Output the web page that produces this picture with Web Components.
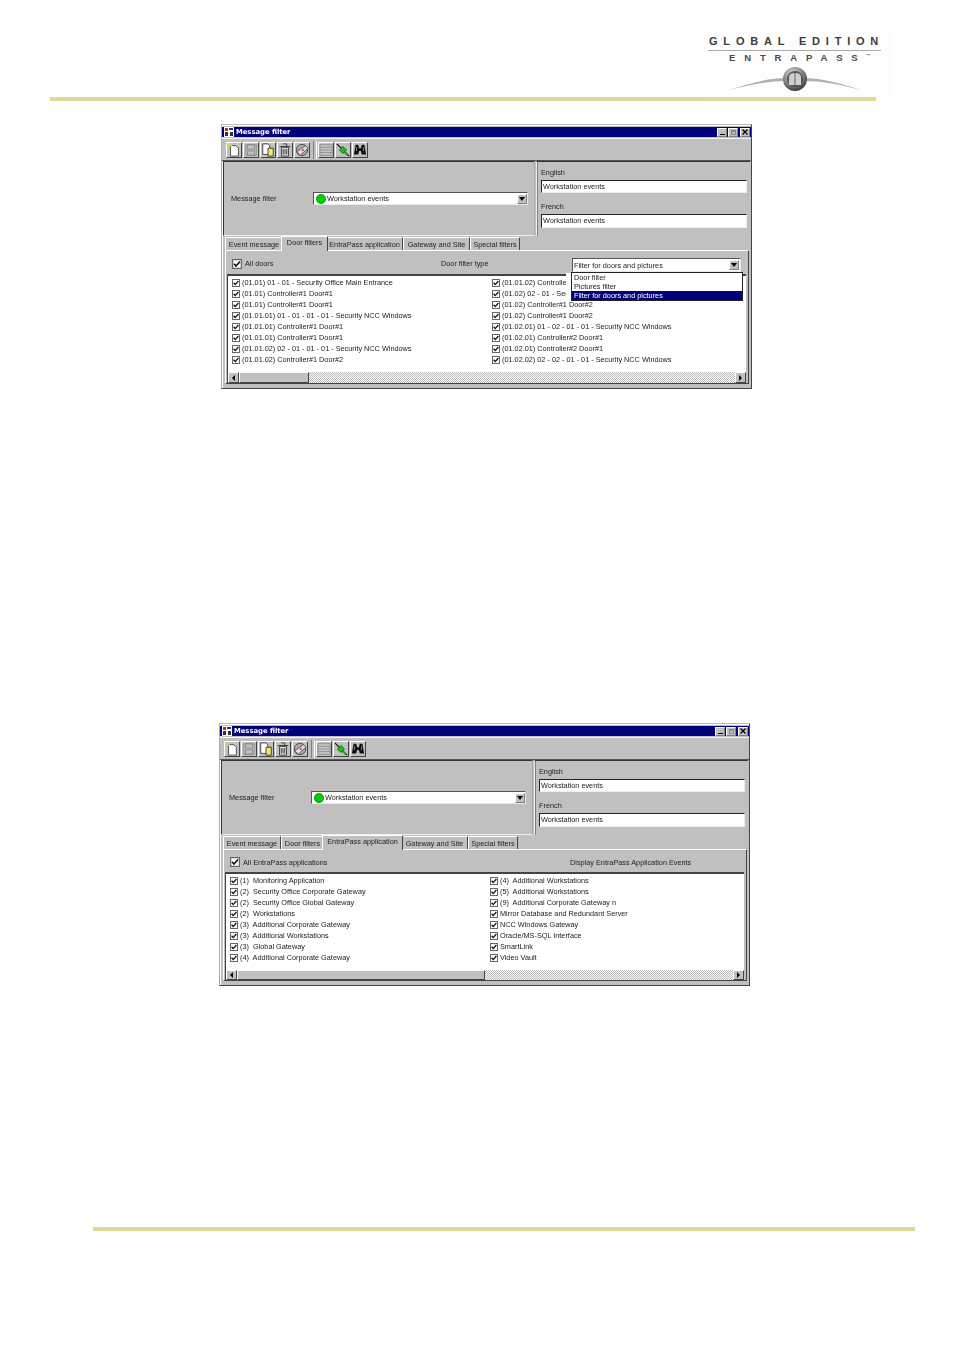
<!DOCTYPE html>
<html lang="en"><head><meta charset="utf-8"><title>Message filter</title>
<style>
html,body{margin:0;padding:0;background:#fff}
body{width:954px;height:1350px;overflow:hidden;font-family:"Liberation Sans",Arial,sans-serif;display:flex;flex-direction:column}
x-dialog.one{margin:23px 0 0 221px}
x-dialog.two{margin:334px 0 0 219px}
x-rule.foot{margin:241px 0 0 93px;width:822px}
</style></head><body>
<x-header></x-header>

<x-dialog class="one" tab="1" head-h="25" scroll-h="11" thumb="70">
  <x-check slot="head" label="All doors" head></x-check>
  <span slot="title">Door filter type</span>
  <x-combo slot="control"></x-combo>
  <x-check slot="left" label="(01.01) 01 - 01 - Security Office Main Entrance"></x-check>
  <x-check slot="left" label="(01.01) Controller#1 Door#1"></x-check>
  <x-check slot="left" label="(01.01) Controller#1 Door#1"></x-check>
  <x-check slot="left" label="(01.01.01) 01 - 01 - 01 - 01 - Security NCC Windows"></x-check>
  <x-check slot="left" label="(01.01.01) Controller#1 Door#1"></x-check>
  <x-check slot="left" label="(01.01.01) Controller#1 Door#1"></x-check>
  <x-check slot="left" label="(01.01.02) 02 - 01 - 01 - 01 - Security NCC Windows"></x-check>
  <x-check slot="left" label="(01.01.02) Controller#1 Door#2"></x-check>
  <x-check slot="right" label="(01.01.02) Controlle"></x-check>
  <x-check slot="right" label="(01.02) 02 - 01 - Sec"></x-check>
  <x-check slot="right" label="(01.02) Controller#1 Door#2"></x-check>
  <x-check slot="right" label="(01.02) Controller#1 Door#2"></x-check>
  <x-check slot="right" label="(01.02.01) 01 - 02 - 01 - 01 - Security NCC Windows"></x-check>
  <x-check slot="right" label="(01.02.01) Controller#2 Door#1"></x-check>
  <x-check slot="right" label="(01.02.01) Controller#2 Door#1"></x-check>
  <x-check slot="right" label="(01.02.02) 02 - 02 - 01 - 01 - Security NCC Windows"></x-check>
  <x-dropdown slot="overlay"></x-dropdown>
</x-dialog>

<x-dialog class="two" tab="2" head-h="24" scroll-h="10" thumb="248">
  <x-check slot="head" label="All EntraPass applications" head></x-check>
  <span slot="title">Display EntraPass Application Events</span>
  <x-check slot="left" label="(1)  Monitoring Application"></x-check>
  <x-check slot="left" label="(2)  Security Office Corporate Gateway"></x-check>
  <x-check slot="left" label="(2)  Security Office Global Gateway"></x-check>
  <x-check slot="left" label="(2)  Workstations"></x-check>
  <x-check slot="left" label="(3)  Additional Corporate Gateway"></x-check>
  <x-check slot="left" label="(3)  Additional Workstations"></x-check>
  <x-check slot="left" label="(3)  Global Gateway"></x-check>
  <x-check slot="left" label="(4)  Additional Corporate Gateway"></x-check>
  <x-check slot="right" label="(4)  Additional Workstations"></x-check>
  <x-check slot="right" label="(5)  Additional Workstations"></x-check>
  <x-check slot="right" label="(9)  Additional Corporate Gateway n"></x-check>
  <x-check slot="right" label="Mirror Database and Redundant Server"></x-check>
  <x-check slot="right" label="NCC Windows Gateway"></x-check>
  <x-check slot="right" label="Oracle/MS-SQL Interface"></x-check>
  <x-check slot="right" label="SmartLink"></x-check>
  <x-check slot="right" label="Video Vault"></x-check>
</x-dialog>

<x-rule class="foot"></x-rule>

<script>
function def(name, css, html, init){
  customElements.define(name, class extends HTMLElement{
    constructor(){super();this.attachShadow({mode:"open"}).innerHTML=`<style>${css}</style>${html}`;}
    connectedCallback(){ if(init) init.call(this,this.shadowRoot); }
  });
}
const RAISED="border:1px solid;border-color:#fff #808080 #808080 #fff;";
const SUNK="border:1px solid;border-color:#555 #e8e8e8 #e8e8e8 #555;";
const FONT='font:7.3px/11px "Liberation Sans",Arial,sans-serif;color:#222;';
const host=el=>el.getRootNode().host;

def("x-rule",":host{display:block;height:4px;background:#dcd99a}","");

def("x-header",`:host{display:block;height:101px;position:relative}
.logo{margin-left:704px;width:189px;height:65px;padding-top:32px;background:linear-gradient(#fff 32px,#fdfdfd 32px);display:flex;flex-direction:column;align-items:flex-start;color:#444;font-family:"Liberation Sans",Arial,sans-serif}
.g{font:bold 11px/11px "Liberation Sans",Arial,sans-serif;letter-spacing:5.8px;white-space:nowrap;margin:4px 0 0 4px;padding:0 0 3px 1px;border-bottom:1px solid #aaa;width:172px;color:#3c3c3c;overflow:visible}
.e{font:bold 9.5px/10px "Liberation Sans",Arial,sans-serif;letter-spacing:8.85px;white-space:nowrap;margin:2px 0 0 25px;color:#4a4a4a}
.e sup{font-size:4px;letter-spacing:0;vertical-align:4px;line-height:0}
svg{display:block;margin:1px 0 0 23px;flex:none}
x-rule{margin-left:50px;width:826px}`,
`<div class="logo"><div class="g">GLOBAL EDITION</div><div class="e">ENTRAPASS<sup>™</sup></div>
<svg width="136" height="30" viewBox="0 0 136 30">
<defs><radialGradient id="b" cx=".4" cy=".3" r=".8"><stop offset="0" stop-color="#ddd"/><stop offset=".6" stop-color="#777"/><stop offset="1" stop-color="#222"/></radialGradient></defs>
<path d="M2 26Q38 14 58 14L58 17Q36 17 2 26Z" fill="#b0b0b0"/>
<path d="M134 26Q98 14 78 14L78 17Q100 17 134 26Z" fill="#b0b0b0"/>
<circle cx="68" cy="15" r="12" fill="url(#b)"/><circle cx="68" cy="15" r="8" fill="#555"/><path d="M62 21V13Q62 9 68 9T74 13V21Z" fill="#cfcfcf"/><path d="M68 9V21" stroke="#666"/></svg></div><x-rule></x-rule>`);

def("x-check",`:host{display:flex;align-items:center;height:11px;${FONT}white-space:pre}
:host([head]){height:14px}
svg{flex:none;margin-right:2px}`,
`<svg width="8" height="8" viewBox="0 0 8 8"><rect x=".5" y=".5" width="7" height="7" fill="#fff" stroke="#666"/><path d="M1.6 3.8l1.6 1.8L6.4 2" fill="none" stroke="#111" stroke-width="1.3"/></svg><span></span>`,
function(s){s.querySelector("span").textContent=this.getAttribute("label");
 if(this.hasAttribute("head")){const v=s.querySelector("svg");v.setAttribute("width",10);v.setAttribute("height",10);v.style.marginRight="3px";}});

def("x-combo",`:host{display:flex;align-items:center;height:14px;box-sizing:border-box;width:169px;background:#fff;${SUNK}${FONT}position:relative}
span{flex:1;padding-left:1px}
b{width:10px;height:10px;background:#c0c0c0;${RAISED}margin-right:1px;display:flex;align-items:center;justify-content:center;box-sizing:border-box}
i{border:3px solid transparent;border-top:4px solid #000;border-bottom:0}`,
`<span>Filter for doors and pictures</span><b><i></i></b>`);

def("x-dropdown",`:host{display:block;position:absolute;left:349px;top:147px;width:172px;box-sizing:border-box;height:29px;background:#fff;border:1px solid #222;${FONT}line-height:9px}
:host::before{content:"";position:absolute;left:-6px;top:0;width:5px;height:29px;background:#fff}
div{height:9px;padding-left:2px;white-space:nowrap}
.s{background:#00007b;color:#fff}`,
`<div>Door filter</div><div>Pictures filter</div><div class="s">Filter for doors and pictures</div>`);

const ICONS=[
`<path d="M4 3h6l3 3v9H4z" fill="#fff" stroke="#444"/><path d="M2 1l2 3M5 0v3M0 4h3" stroke="#e8e020" stroke-width="1.3"/>`,
`<path d="M2 2h12v12H2z" fill="none" stroke="#8a8a8a"/><path d="M4 2h8v5H4zM4 9h8v5H4z" fill="none" stroke="#8a8a8a"/>`,
`<path d="M2 1h6l2 2v10H2z" fill="#fff" stroke="#333"/><path d="M8 6h6v9H8z" fill="#f3e86a" stroke="#333"/>`,
`<path d="M4 5h8v10H4z" fill="#ddd" stroke="#333"/><path d="M2 4h12M6 1h4v3M6 7v6M8 7v6M10 7v6" fill="none" stroke="#333"/>`,
`<circle cx="8" cy="8" r="6.5" fill="#aaa" stroke="#444"/><path d="M2 10l10-7 3 3-9 8z" fill="#ddd" stroke="#555"/><circle cx="9" cy="8" r="1.2" fill="#d33"/>`,
`<path d="M1 2h14v12H1z" fill="#c8c8c8" stroke="#8a8a8a"/><path d="M1 5h14M1 8h14M1 11h14" stroke="#8a8a8a"/>`,
`<path d="M1 1l14 14" stroke="#111" stroke-width="1.5"/><path d="M4 8l4-4 4 4-4 4z" fill="#18c018" stroke="#0a6a0a"/><path d="M10 11l3 3" stroke="#18c018" stroke-width="2"/>`,
`<path d="M3 2h3l1 4h2l1-4h3l2 11h-5L9 9H7l-1 4H1z" fill="#111"/><path d="M4 5v4M12 5v4" stroke="#999"/>`];

def("x-tool",`:host{display:block;width:14px;height:14px;background:#c0c0c0;${RAISED}border-right-color:#444;border-bottom-color:#444;margin-right:1px}
svg{display:block}`,`<svg width="14" height="14" viewBox="0 0 16 16"></svg>`,
function(s){s.querySelector("svg").innerHTML=ICONS[+this.getAttribute("i")];});

def("x-toolbar",`:host{display:flex;align-items:center;box-sizing:border-box;padding:1px 0 0 4px;background:#c0c0c0;border-top:1px solid #f4f4f4;border-bottom:1px solid #555;margin-top:1px;height:23px}
.sep{width:2px;height:18px;margin:0 1px 0 2px;border-left:1px solid #808080;border-right:1px solid #fff}`,
`<x-tool i="0"></x-tool><x-tool i="1"></x-tool><x-tool i="2"></x-tool><x-tool i="3"></x-tool><x-tool i="4"></x-tool><div class="sep"></div><x-tool i="5"></x-tool><x-tool i="6"></x-tool><x-tool i="7"></x-tool>`);

def("x-titlebar",`:host{display:flex;align-items:center;height:10px;background:#00007b;color:#fff;padding-left:2px;font:bold 6.8px/10px "DejaVu Sans",sans-serif}
svg{margin-right:2px;flex:none}
span{flex:1}
.b{width:10px;height:9px;box-sizing:border-box;background:#c0c0c0;${RAISED}margin-left:1px;display:flex;align-items:center;justify-content:center;color:#000}
.c{margin-left:2px;margin-right:1px}
.min{width:5px;height:1px;background:#000;margin-top:5px}
.max{width:5px;height:5px;border:1px solid #8a8a8a;border-top-width:2px;box-sizing:border-box}`,
`<svg width="10" height="10" viewBox="0 0 10 10"><rect width="10" height="10" fill="#fff"/><path d="M1 1h3v3H1z" fill="#b03030"/><path d="M5 1h4v2H5z" fill="#203090"/><path d="M1 5h3v4H1zM6 5h3v4H6z" fill="#333"/></svg><span>Message filter</span><div class="b"><div class="min"></div></div><div class="b"><div class="max"></div></div><div class="b c"><svg width="6" height="6" viewBox="0 0 6 6" style="margin:0"><path d="M.5.5l5 5M5.5.5l-5 5" stroke="#000" stroke-width="1.2"/></svg></div>`);

def("x-upper",`:host{display:flex;height:75px;${FONT}margin:0 1px 0 1px;background:#c0c0c0}
.l{width:312px;box-sizing:border-box;border-top:1px solid #333;border-left:1px solid #333;border-right:1px solid #aaa;border-bottom:1px solid #eee;display:flex;align-items:center;padding:0 6px 0 7px;position:relative}
.l>span{width:82px;flex:none}
.r{flex:1;margin-left:1px;border-top:1px solid #333;border-left:1px solid #eee;box-shadow:inset 1px 0 #808080;padding:6px 3px 0 4px;display:flex;flex-direction:column}
.r label{height:9px;line-height:9px;padding-bottom:3px;display:block}
.in{height:13px;box-sizing:border-box;background:#fff;${SUNK}border-color:#222 #eee #eee #222;padding-left:1px;line-height:12px;margin-bottom:9px}
.in.b2{height:14px}
.cb{flex:1;height:13px;box-sizing:border-box;background:#fff;${SUNK}display:flex;align-items:center;padding-left:2px}
.cb svg{margin-right:1px}
.cb span{flex:1}
.cb b{width:10px;height:10px;background:#c0c0c0;${RAISED}box-sizing:border-box;display:flex;align-items:center;justify-content:center}
.cb i{border:3px solid transparent;border-top:4px solid #000;border-bottom:0}`,
`<div class="l"><span>Message filter</span><div class="cb"><svg width="10" height="10" viewBox="0 0 10 10"><circle cx="5" cy="5" r="4.6" fill="#00d000" stroke="#007000" stroke-width=".7"/></svg><span>Workstation events</span><b><i></i></b></div></div>
<div class="r"><label>English</label><div class="in">Workstation events</div><label>French</label><div class="in b2">Workstation events</div></div>`);

def("x-tabs",`:host{display:flex;height:14px;align-items:flex-end;padding-left:3px;${FONT}}
div{height:13px;box-sizing:border-box;border-left:1px solid #fff;border-top:1px solid #fff;border-right:1px solid #444;line-height:13px;white-space:nowrap;display:flex;justify-content:center;flex:none}
.a{height:15px;margin:0 -2px -1px;background:#c0c0c0;position:relative;z-index:1;line-height:12px}`,
``,function(s){
 if(s.querySelector("div"))return;
 const w=[58,43,77,67,50],t=["Event message","Door filters","EntraPass application","Gateway and Site","Special filters"],a=+host(this).getAttribute("tab");
 t.forEach((x,i)=>{const d=document.createElement("div");d.textContent=x;d.style.width=(i==a?w[i]+4:w[i])+"px";if(i==a)d.className="a";s.appendChild(d);});});

def("x-hscroll",`:host{display:flex;box-sizing:border-box;background:repeating-conic-gradient(#fff 0 25%,#b8b8b8 0 50%) 0 0/2px 2px}
.b,.t{background:#c0c0c0;${RAISED}border-color:#fff #444 #444 #fff;box-sizing:border-box;display:flex;align-items:center;justify-content:center}
.b{width:11px;flex:none}
.g{flex:1}
i{border:3px solid transparent}
.lf{border-right:3px solid #000;border-left:0}
.rt{border-left:3px solid #000;border-right:0}`,
`<div class="b"><i class="lf"></i></div><div class="t"></div><div class="g"></div><div class="b"><i class="rt"></i></div>`,
function(s){s.querySelector(".t").style.width=host(this).getAttribute("thumb")+"px";this.style.height=host(this).getAttribute("scroll-h")+"px";});

def("x-dialog",`:host{display:block;position:relative;width:531px;box-sizing:border-box;background:#c0c0c0;padding:2px 0 4px;border:1px solid #aaa;border-top-color:#bbb;border-right-color:#444;border-bottom-color:#444;box-shadow:inset 1px 1px #fff;filter:blur(.3px);${FONT}}
.panel{margin:0 2px 0 3px;border-left:1px solid #fff;border-top:1px solid #fff;border-right:1px solid #444;border-bottom:1px solid #444;padding:0 2px 0 1px;display:flex;flex-direction:column}
.head{display:flex;align-items:center;box-sizing:border-box;border-bottom:2px solid #444;padding:2px 0 0 5px;position:relative}
.head .ttl{position:absolute}
.list{height:96px;box-sizing:border-box;background:#fff;border-left:1px solid #444;padding:1px 0 0 4px;display:grid;grid-template-columns:260px 1fr;align-content:start}
.col{display:flex;flex-direction:column}
x-hscroll{border-left:1px solid #444}
.ctl{position:absolute;left:345px;top:7px}`,
`<x-titlebar></x-titlebar><x-toolbar></x-toolbar><x-upper></x-upper><x-tabs></x-tabs>
<div class="panel"><div class="head"><slot name="head"></slot><span class="ttl"><slot name="title"></slot></span><span class="ctl"><slot name="control"></slot></span></div>
<div class="list"><div class="col"><slot name="left"></slot></div><div class="col"><slot name="right"></slot></div></div><x-hscroll></x-hscroll></div><slot name="overlay"></slot>`,
function(s){
 const head=+this.getAttribute("head-h"),tab=this.getAttribute("tab");
 s.querySelector(".head").style.height=head+"px";
 s.querySelector(".ttl").style.left=(tab=="1"?214:345)+"px";
});
</script>
</body></html>
